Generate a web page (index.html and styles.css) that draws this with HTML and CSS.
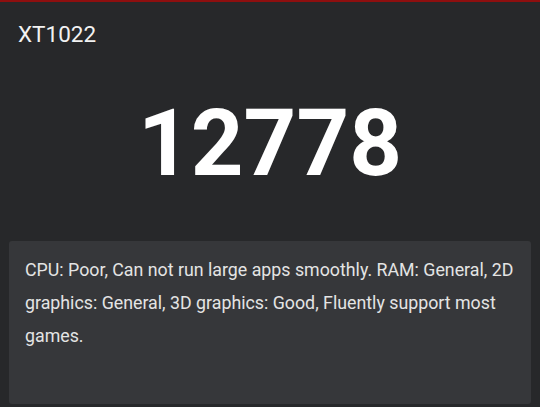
FILE: index.html
```html
<!DOCTYPE html>
<html lang="en">

<head>
    <meta charset="UTF-8">
    <meta name="viewport" content="width=device-width, initial-scale=1.0">
    <title>XT1022 Score</title>
    <link rel="stylesheet" href="styles.css">
</head>

<body>
    <div class="top-bar"></div>
    <div class="page">
        <h1 class="device">XT1022</h1>
        <div class="score">12778</div>
        <div class="card">
            <p>CPU: Poor, Can not run large apps smoothly. RAM: General, 2D graphics: General, 3D graphics: Good, Fluently support most games.</p>
        </div>
    </div>
</body>

</html>
```

FILE: styles.css
```css
html,
body {
    height: 100%;
}

body {
    font-family: Roboto, "Noto Sans", sans-serif;
    background-color: #27282a;
    color: #f2f2f2;
    margin: 0;
    padding: 0;
    overflow: hidden;
}

.top-bar {
    height: 2px;
    background-color: #8e0f0f;
}

.page {
    padding: 0 9px 0 9px;
}

.device {
    font-size: 22.5px;
    font-weight: normal;
    line-height: 26px;
    margin: 19px 0 0 9px;
}

.score {
    font-size: 92px;
    font-weight: bold;
    line-height: 93px;
    text-align: center;
    color: #ffffff;
    margin-top: 50px;
}

.card {
    margin-top: 51px;
    height: 163px;
    padding: 12px 12px 0 16px;
    box-sizing: border-box;
    background-color: #36373a;
    border-radius: 3px;
}

.card p {
    margin: 0;
    font-size: 17.8px;
    line-height: 33px;
    color: #e4e4e4;
}
```
